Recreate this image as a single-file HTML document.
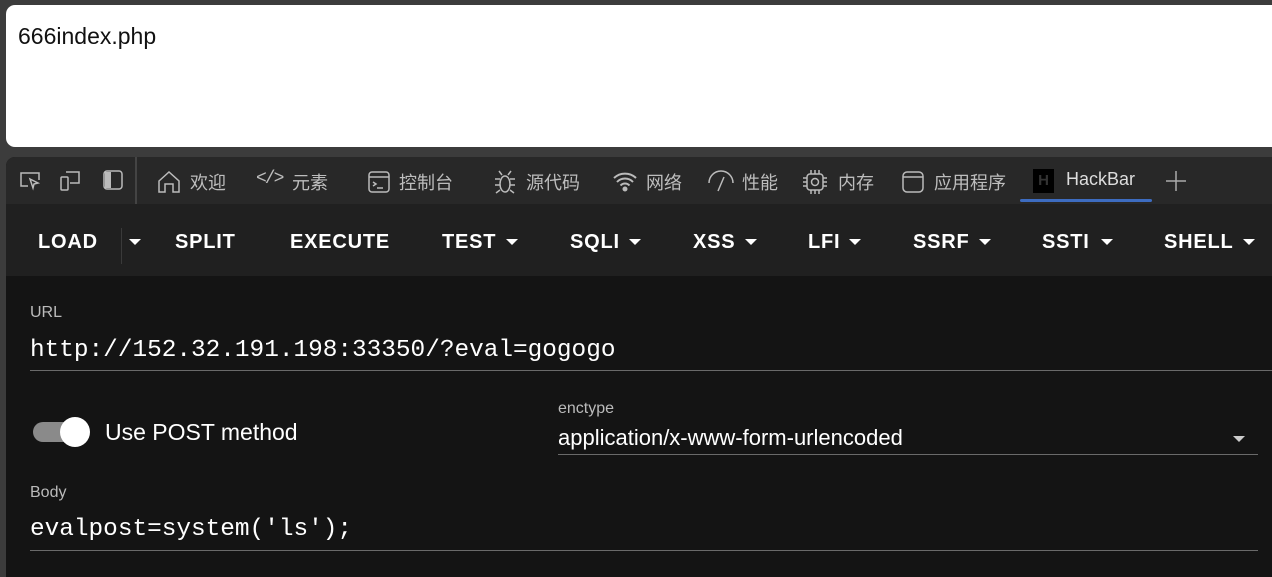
<!DOCTYPE html>
<html><head><meta charset="utf-8"><style>
*{margin:0;padding:0;box-sizing:border-box}
body{width:1272px;height:567px;background:#3c3c3c;position:relative;overflow:hidden;font-family:"Liberation Sans","Noto Sans CJK SC",sans-serif}
.page{position:absolute;left:6px;top:5px;width:1280px;height:142px;background:#fff;border-radius:9px}
.page span{position:absolute;left:12px;top:18px;font-size:23px;color:#111}
.dev{position:absolute;left:6px;top:157px;width:1280px;height:420px;background:#141414;border-radius:9px 0 0 0;overflow:hidden}
.tabs{position:absolute;left:0;top:0;width:100%;height:47px;background:#282828}
.tb{position:absolute;left:0;top:47px;width:100%;height:72px;background:#202020}
.t{position:absolute;top:12px;font-size:18px;color:#bdbdbd;white-space:nowrap}
.ic{position:absolute;top:12px}
.b{position:absolute;top:74px;font-size:20px;font-weight:bold;color:#fff;letter-spacing:0.8px}
.c{position:absolute;top:82px;width:0;height:0;border-left:6px solid transparent;border-right:6px solid transparent;border-top:6px solid #fff}
.lab{position:absolute;font-size:16px;color:#bbb}
.mono{position:absolute;font-family:"Liberation Mono",monospace;font-size:24.4px;color:#fff;white-space:nowrap}
.line{position:absolute;height:1px;background:#6a6a6a}
</style></head><body>
<div class="page"><span>666index.php</span></div>
<div class="dev">
<div class="tabs">
<svg class="ic" style="left:12px" width="26" height="24" viewBox="0 0 26 24" fill="none" stroke="#bbb" stroke-width="1.5"><path d="M10 17H3V4h18v7"/><path d="M12 10l8 4-4 1-1 4z"/></svg>
<svg class="ic" style="left:52px" width="26" height="24" viewBox="0 0 26 24" fill="none" stroke="#bbb" stroke-width="1.5"><rect x="3" y="8" width="7" height="13" rx="1"/><path d="M8 3h13v11h-9"/></svg>
<svg class="ic" style="left:96px" width="24" height="24" viewBox="0 0 24 24"><rect x="2" y="2" width="18" height="18" rx="3" fill="none" stroke="#bbb" stroke-width="1.5"/><rect x="3" y="3" width="6" height="16" fill="#bbb"/></svg>
<div style="position:absolute;left:129px;top:0;width:2px;height:47px;background:#444"></div>
<svg class="ic" style="left:150px" width="26" height="26" viewBox="0 0 26 26" fill="none" stroke="#bbb" stroke-width="1.5"><path d="M3 12L13 3l10 9v11h-6v-8h-8v8H3z"/></svg>
<span class="t" style="left:184px">欢迎</span>
<span class="t" style="left:250px;font-family:'Liberation Mono';letter-spacing:-2px">&lt;/&gt;</span><span class="t" style="left:286px">元素</span>
<svg class="ic" style="left:361px" width="24" height="26" viewBox="0 0 24 26" fill="none" stroke="#bbb" stroke-width="1.5"><rect x="2" y="3" width="20" height="20" rx="3"/><path d="M2 8h20M6 13l3 2-3 2M10 19h6"/></svg>
<span class="t" style="left:393px">控制台</span>
<svg class="ic" style="left:486px" width="26" height="26" viewBox="0 0 26 26" fill="none" stroke="#bbb" stroke-width="1.5"><ellipse cx="13" cy="15" rx="5" ry="8"/><path d="M8 10H3M18 10h5M8 16H3M18 16h5M8 21l-4 3M18 21l4 3M10 6L7 2M16 6l3-4"/></svg>
<span class="t" style="left:520px">源代码</span>
<svg class="ic" style="left:606px" width="26" height="24" viewBox="0 0 26 24" fill="none" stroke="#bbb" stroke-width="2"><path d="M2 9a16 16 0 0 1 22 0M5 13a11 11 0 0 1 16 0M8.5 16.5a6 6 0 0 1 9 0"/><circle cx="13" cy="20" r="1.5" fill="#bbb"/></svg>
<span class="t" style="left:640px">网络</span>
<svg class="ic" style="left:700px" width="30" height="24" viewBox="0 0 30 24" fill="none" stroke="#bbb" stroke-width="1.5"><path d="M3 14a12 12 0 0 1 24 0M12 22l6-14"/></svg>
<span class="t" style="left:736px">性能</span>
<svg class="ic" style="left:796px" width="26" height="26" viewBox="0 0 26 26" fill="none" stroke="#bbb" stroke-width="1.5"><rect x="5" y="5" width="16" height="16" rx="3"/><circle cx="13" cy="13" r="3.5"/><path d="M9 1v4M13 1v4M17 1v4M9 21v4M13 21v4M17 21v4M1 9h4M1 13h4M1 17h4M21 9h4M21 13h4M21 17h4"/></svg>
<span class="t" style="left:832px">内存</span>
<svg class="ic" style="left:895px" width="24" height="26" viewBox="0 0 24 26" fill="none" stroke="#bbb" stroke-width="1.5"><rect x="2" y="3" width="20" height="20" rx="4"/><path d="M2 8h20"/></svg>
<span class="t" style="left:928px">应用程序</span>
<div style="position:absolute;left:1027px;top:12px;width:21px;height:24px;background:#000;color:#333;font-size:15px;font-weight:bold;text-align:center;line-height:24px">H</div>
<span class="t" style="left:1060px;color:#ddd">HackBar</span>
<div style="position:absolute;left:1014px;top:42px;width:132px;height:3px;background:#3d6cc0;border-radius:2px"></div>
<svg class="ic" style="left:1158px" width="24" height="24" viewBox="0 0 24 24" stroke="#aaa" stroke-width="1.5"><path d="M12 2v20M2 12h20"/></svg>
</div>
<div class="tb"></div>
<div style="position:absolute;left:115px;top:71px;width:1px;height:36px;background:#3a3a3a"></div>
<span class="b" style="left:32px">LOAD</span><div class="c" style="left:123px"></div>
<span class="b" style="left:169px">SPLIT</span>
<span class="b" style="left:284px">EXECUTE</span>
<span class="b" style="left:436px">TEST</span><div class="c" style="left:500px"></div>
<span class="b" style="left:564px">SQLI</span><div class="c" style="left:623px"></div>
<span class="b" style="left:687px">XSS</span><div class="c" style="left:739px"></div>
<span class="b" style="left:802px">LFI</span><div class="c" style="left:843px"></div>
<span class="b" style="left:907px">SSRF</span><div class="c" style="left:973px"></div>
<span class="b" style="left:1036px">SSTI</span><div class="c" style="left:1095px"></div>
<span class="b" style="left:1158px">SHELL</span><div class="c" style="left:1237px"></div>
<span class="lab" style="left:24px;top:147px">URL</span>
<span class="mono" style="left:24px;top:180px">http://152.32.191.198:33350/?eval=gogogo</span>
<div class="line" style="left:24px;top:213px;width:1260px"></div>
<div style="position:absolute;left:27px;top:265px;width:48px;height:20px;border-radius:10px;background:#8a8a8a"></div>
<div style="position:absolute;left:54px;top:260px;width:30px;height:30px;border-radius:50%;background:#fff"></div>
<span style="position:absolute;left:99px;top:262px;font-size:23px;color:#fff">Use POST method</span>
<span class="lab" style="left:552px;top:243px">enctype</span>
<span style="position:absolute;left:552px;top:268px;font-size:22px;color:#fff">application/x-www-form-urlencoded</span>
<div class="c" style="left:1227px;top:279px;border-top-color:#ccc"></div>
<div class="line" style="left:552px;top:297px;width:700px"></div>
<span class="lab" style="left:24px;top:327px">Body</span>
<span class="mono" style="left:24px;top:359px">evalpost=system('ls');</span>
<div class="line" style="left:24px;top:393px;width:1228px"></div>
</div>
</body></html>
